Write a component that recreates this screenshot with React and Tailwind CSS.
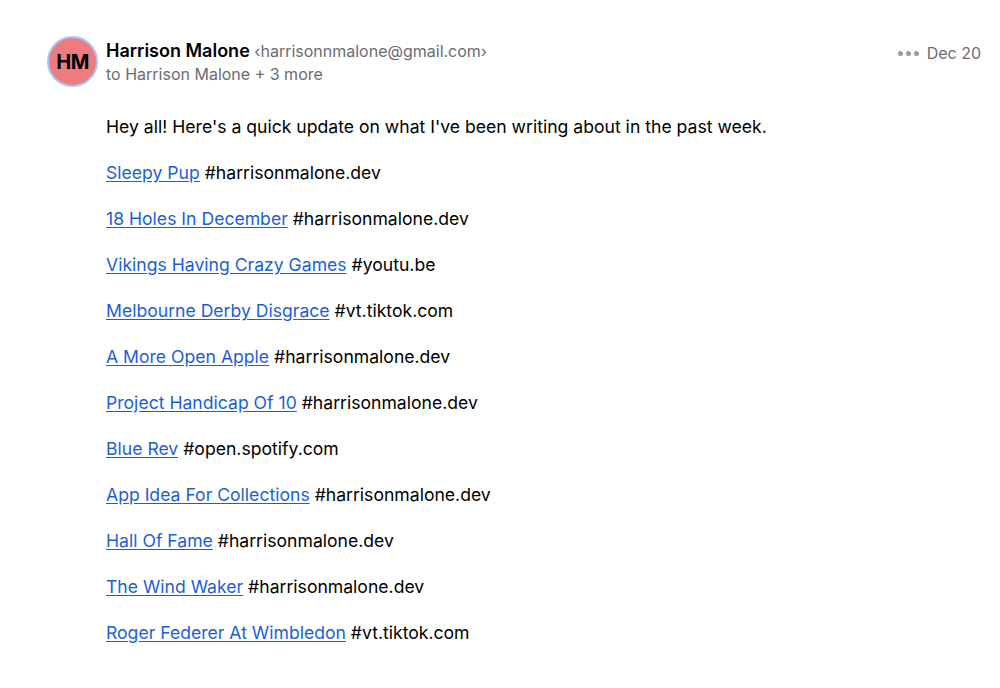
const links = [
  ['Sleepy Pup', 'harrisonmalone.dev'],
  ['18 Holes In December', 'harrisonmalone.dev'],
  ['Vikings Having Crazy Games', 'youtu.be'],
  ['Melbourne Derby Disgrace', 'vt.tiktok.com'],
  ['A More Open Apple', 'harrisonmalone.dev'],
  ['Project Handicap Of 10', 'harrisonmalone.dev'],
  ['Blue Rev', 'open.spotify.com'],
  ['App Idea For Collections', 'harrisonmalone.dev'],
  ['Hall Of Fame', 'harrisonmalone.dev'],
  ['The Wind Waker', 'harrisonmalone.dev'],
  ['Roger Federer At Wimbledon', 'vt.tiktok.com'],
];

export default function App() {
  return (
    <div className="min-h-screen bg-white font-['Inter',sans-serif] text-black">
      <div className="flex items-start pl-[47px] pr-[19px] pt-[36px]">
        {/* Avatar */}
        <div className="w-[51px] h-[51px] shrink-0 rounded-full bg-[#ee7b80] border-2 border-[#a9c7f2] flex items-center justify-center">
          <span className="text-[20px] font-bold tracking-tight">HM</span>
        </div>

        <div className="flex-1 ml-[8px]">
          {/* Header */}
          <div className="flex items-start justify-between">
            <div>
              <div className="leading-[22px] mt-[4px]">
                <span className="text-[18px] font-semibold">Harrison Malone</span>{' '}
                <span className="text-[16px] text-[#6b6b73]">‹harrisonnmalone@gmail.com›</span>
              </div>
              <div className="text-[16px] text-[#6b6b73] leading-[22px] mt-[1px]">
                to Harrison Malone + 3 more
              </div>
            </div>
            <div className="flex items-center gap-[8px] mt-[5px] text-[16px] text-[#6b6b73]">
              <span className="flex gap-[3px]">
                <span className="w-[5px] h-[5px] rounded-full bg-[#9a9aa0]" />
                <span className="w-[5px] h-[5px] rounded-full bg-[#9a9aa0]" />
                <span className="w-[5px] h-[5px] rounded-full bg-[#9a9aa0]" />
              </span>
              <span>Dec 20</span>
            </div>
          </div>

          {/* Body */}
          <div className="mt-[28px] text-[17.6px] leading-[28px] flex flex-col gap-[18px]">
            <p>Hey all! Here's a quick update on what I've been writing about in the past week.</p>
            {links.map(([title, host]) => (
              <p key={title}>
                <a href="#" className="text-[#1a5fd6] underline underline-offset-2">{title}</a> #{host}
              </p>
            ))}
          </div>
        </div>
      </div>
    </div>
  );
}
